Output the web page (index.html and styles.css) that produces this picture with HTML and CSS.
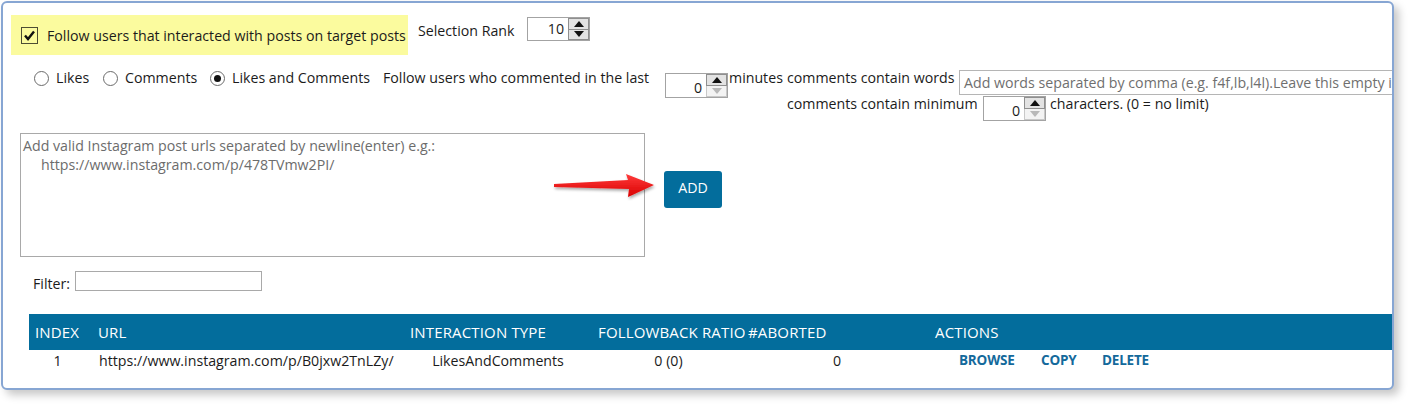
FILE: index.html
```html
<!DOCTYPE html>
<html>
<head>
<meta charset="utf-8">
<link rel="stylesheet" href="styles.css">
</head>
<body>
<div class="window">
  <div class="row1">
    <div class="hl">
      <span class="chk"><svg width="15" height="15" viewBox="0 0 15 15"><path d="M3 7.5 L6 11 L12 3.5" fill="none" stroke="#111" stroke-width="2.4"/></svg></span>
      <span class="hl-lbl">Follow users that interacted with posts on target posts</span>
    </div>
    <span class="rank-lbl">Selection Rank</span>
    <div class="spin spin-rank">
      <span class="val">10</span>
      <span class="btns">
        <span class="sb up"><svg width="10" height="6" viewBox="0 0 10 6"><path d="M0 6 L5 0 L10 6Z" fill="#111"/></svg></span>
        <span class="sb dn"><svg width="10" height="6" viewBox="0 0 10 6"><path d="M0 0 L5 6 L10 0Z" fill="#111"/></svg></span>
      </span>
    </div>
  </div>

  <div class="row2">
    <div class="opts">
      <span class="opt o1"><span class="radio"></span>Likes</span>
      <span class="opt o2"><span class="radio"></span>Comments</span>
      <span class="opt o3"><span class="radio on"></span>Likes and Comments</span>
    </div>
    <span class="follow-lbl">Follow users who commented in the last</span>
    <div class="spin spin-min">
      <span class="val">0</span>
      <span class="btns">
        <span class="sb up"><svg width="10" height="6" viewBox="0 0 10 6"><path d="M0 6 L5 0 L10 6Z" fill="#111"/></svg></span>
        <span class="sb dn dis"><svg width="10" height="6" viewBox="0 0 10 6"><path d="M0 0 L5 6 L10 0Z" fill="#b8b8b8"/></svg></span>
      </span>
    </div>
    <span class="minutes">minutes</span>
    <div class="cc">
      <div class="cc-line">
        <span class="cc-lbl cc-w">comments contain words</span>
        <div class="words">Add words separated by comma (e.g. f4f,lb,l4l).Leave this empty i</div>
      </div>
      <div class="cc-line">
        <span class="cc-lbl cc-m">comments contain minimum</span>
        <div class="spin spin-chr">
          <span class="val">0</span>
          <span class="btns">
            <span class="sb up"><svg width="10" height="6" viewBox="0 0 10 6"><path d="M0 6 L5 0 L10 6Z" fill="#111"/></svg></span>
            <span class="sb dn dis"><svg width="10" height="6" viewBox="0 0 10 6"><path d="M0 0 L5 6 L10 0Z" fill="#b8b8b8"/></svg></span>
          </span>
        </div>
        <span class="chars">characters. (0 = no limit)</span>
      </div>
    </div>
  </div>

  <div class="row3">
    <div class="urls">Add valid Instagram post urls separated by newline(enter) e.g.:<br><span class="ex">https://www.instagram.com/p/478TVmw2PI/</span></div>
    <svg class="arrow" width="110" height="34" viewBox="0 0 110 34">
      <defs>
        <linearGradient id="rg" x1="0" y1="0" x2="0" y2="1">
          <stop offset="0" stop-color="#ff3b3b"/>
          <stop offset="1" stop-color="#d90000"/>
        </linearGradient>
        <filter id="sh" x="-10%" y="-30%" width="130%" height="170%">
          <feGaussianBlur in="SourceAlpha" stdDeviation="1.5"/>
          <feOffset dx="1" dy="2"/>
          <feComponentTransfer><feFuncA type="linear" slope="0.35"/></feComponentTransfer>
          <feMerge><feMergeNode/><feMergeNode in="SourceGraphic"/></feMerge>
        </filter>
      </defs>
      <path filter="url(#sh)" fill="url(#rg)" d="M2 15 L76 11 L74 5 L102 16 L76 28 L77 20 L2 18 Z"/>
    </svg>
    <span class="add">ADD</span>
  </div>

  <div class="filter">
    <span class="f-lbl">Filter:</span>
    <span class="f-in"></span>
  </div>

  <div class="table">
    <div class="thead">
      <span class="c c1">INDEX</span>
      <span class="c c2">URL</span>
      <span class="c c3">INTERACTION TYPE</span>
      <span class="c c4">FOLLOWBACK RATIO</span>
      <span class="c c5">#ABORTED</span>
      <span class="c c6">ACTIONS</span>
    </div>
    <div class="trow">
      <span class="c c1 ctr">1</span>
      <span class="c c2">https://www.instagram.com/p/B0jxw2TnLZy/</span>
      <span class="c c3 ctr">LikesAndComments</span>
      <span class="c c4 ctr">0 (0)</span>
      <span class="c c5 ctr">0</span>
      <span class="c c6 acts"><span class="act a1">BROWSE</span><span class="act a2">COPY</span><span class="act">DELETE</span></span>
    </div>
  </div>
</div>
</body>
</html>
```

FILE: styles.css
```css
* { box-sizing: border-box; }
html, body { margin: 0; padding: 0; background: #fff; }
body {
  font-family: "Open Sans", "Noto Sans", sans-serif;
  font-size: 14.2px;
  color: #1b1b1b;
  width: 1408px;
  height: 406px;
  overflow: hidden;
}
.window {
  margin: 1px 0 0 1px;
  width: 1393px;
  height: 389px;
  border: 2px solid #87a6d3;
  border-radius: 6px;
  box-shadow: 5px 5px 9px rgba(0,0,0,0.22);
  overflow: hidden;
  background: #fff;
}
/* row 1 */
.row1 { display: flex; align-items: center; margin-top: 12px; padding-left: 8px; height: 40px; }
.row1 > * { flex-shrink: 0; }
.hl { display: flex; align-items: center; background: #fbfb9e; height: 40px; width: 397px; padding-left: 10px; }
.chk { width: 17px; height: 17px; border: 1px solid #4d4d33; display: flex; align-items: center; justify-content: center; background: #fbfb9e; }
.hl-lbl { margin-left: 9px; white-space: nowrap; }
.rank-lbl { margin-left: 10px; width: 109px; white-space: nowrap; margin-top: -10px; }
.spin { display: flex; border: 1px solid #a3a3a3; background: #fff; flex-shrink: 0; }
.spin .val { flex: 1; text-align: right; padding-right: 4px; line-height: 22px; }
.btns { display: flex; flex-direction: column; width: 21px; }
.sb { flex: 1; display: flex; align-items: center; justify-content: center; background: #e3e3e3; border: 1px solid #8f8f8f; }
.sb.dn { border-top: none; }
.sb.dis { background: #f3f3f3; border-color: #c8c8c8; }
.spin-rank { width: 63px; height: 24px; margin-top: -12px; }
.spin-min, .spin-chr { width: 63px; height: 25px; }
.spin-min .val, .spin-chr .val { line-height: 28px; }
/* row 2 */
.row2 { display: flex; align-items: flex-start; margin-top: 15px; padding-left: 31px; }
.row2 > * { flex-shrink: 0; }
.opts { display: flex; line-height: 16px; }
.opt { display: flex; align-items: center; white-space: nowrap; flex-shrink: 0; }
.radio { width: 15px; height: 15px; border: 1px solid #6b6b6b; border-radius: 50%; margin-right: 7px; display: inline-flex; align-items: center; justify-content: center; background: #fff; flex-shrink: 0; }
.radio.on::after { content: ""; width: 7px; height: 7px; border-radius: 50%; background: #111; }
.o1 { width: 69px; }
.o2 { width: 107px; }
.o3 { width: 173px; }
.follow-lbl { width: 282px; white-space: nowrap; line-height: 16px; }
.spin-min { margin-top: 3px; }
.minutes { margin-left: 1px; width: 58px; line-height: 16px; white-space: nowrap; }
.cc { display: flex; flex-direction: column; }
.cc-line { display: flex; align-items: flex-start; height: 26px; }
.cc-line > * { flex-shrink: 0; }
.cc-lbl { line-height: 16px; white-space: nowrap; }
.cc-w { width: 172px; }
.cc-m { width: 196px; }
.words { width: 460px; height: 25px; border: 1px solid #b5b5b5; color: #6f6f6f; white-space: nowrap; overflow: hidden; padding: 3px 4px; line-height: 17px; }
.chars { margin-left: 4px; line-height: 16px; white-space: nowrap; }
/* row 3 */
.row3 { display: flex; align-items: flex-start; margin-top: 11px; padding-left: 17px; position: relative; }
.urls { width: 625px; height: 124px; border: 1px solid #a9a9a9; color: #6c6c6c; padding: 2px 2px; line-height: 19px; flex-shrink: 0; }
.urls .ex { margin-left: 18px; }
.arrow { position: absolute; left: 549px; top: 36px; }
.add { margin-left: 19px; margin-top: 38px; width: 58px; height: 37px; background: #036d9c; border-radius: 3px; color: #fff; display: flex; align-items: center; justify-content: center; padding-bottom: 5px; flex-shrink: 0; }
/* filter */
.filter { display: flex; align-items: flex-end; margin-top: 14px; padding-left: 30px; }
.f-lbl { width: 42px; line-height: 14px; }
.f-in { width: 187px; height: 20px; border: 1px solid #a9a9a9; }
/* table */
.table { margin-top: 23px; margin-left: 26px; }
.thead { display: flex; align-items: center; height: 36px; background: #036d9c; color: #fff; font-size: 15px; letter-spacing: 0.15px; }
.trow { display: flex; align-items: center; height: 20px; }
.c { white-space: nowrap; overflow: hidden; padding-left: 6px; flex-shrink: 0; }
.c1 { width: 63px; }
.c2 { width: 312px; }
.c3 { width: 188px; }
.c4 { width: 153px; padding-right: 0; }
.c5 { width: 184px; padding-left: 3px; }
.c6 { flex: 1; }
.trow .c2 { padding-left: 7px; }
.ctr { text-align: center; padding-left: 0; }
.trow .c1 { padding-left: 0; padding-right: 6px; }
.acts { display: flex; padding-left: 30px; }
.act { color: #14699b; font-weight: bold; font-size: 13.5px; letter-spacing: -0.2px; }
.a1 { width: 82px; }
.a2 { width: 61px; }
```
